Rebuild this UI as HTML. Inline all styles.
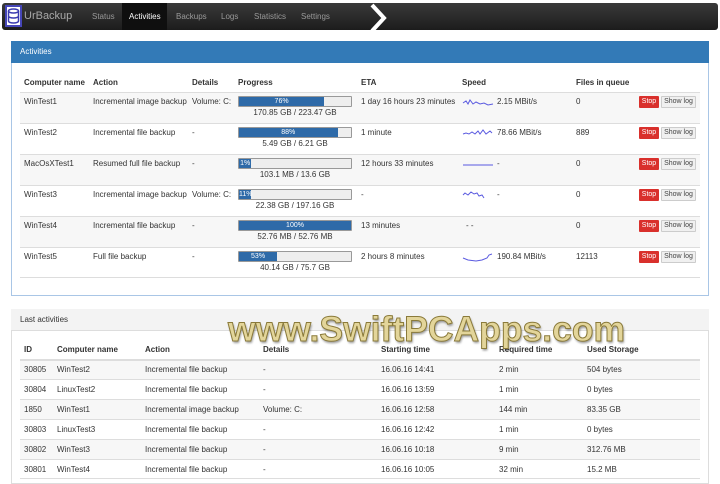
<!DOCTYPE html>
<html><head><meta charset="utf-8"><style>
*{margin:0;padding:0;box-sizing:border-box}
body{width:720px;height:480px;overflow:hidden;background:#fff;font-family:"Liberation Sans",Arial,sans-serif;font-size:8px;color:#333;position:relative}
.a{position:absolute;white-space:nowrap}
.nav{left:2px;top:3px;width:716px;height:27px;background:linear-gradient(#3a3a3a,#1c1c1c);border-radius:3px}
.ni{top:3px;height:27px;line-height:27px;color:#9a9a9a;font-size:8px}
.p1{left:11px;top:41px;width:698px;height:255px;border:1px solid #a9c6e6;}
.h1{left:11px;top:41px;width:698px;height:22px;background:#337ab7;color:#fff;line-height:22px;padding-left:9px}
.p2{left:11px;top:309px;width:698px;height:175px;border:1px solid #ddd}
.h2{left:11px;top:309px;width:698px;height:22px;background:#f3f3f3;border-bottom:1px solid #ddd;line-height:22px;padding-left:9px;color:#333}
.th{font-weight:bold;color:#333}
.row{left:20px;width:680px;border-top:1px solid #ddd}
.g{background:#f7f7f7}
.bar{left:238px;width:114px;height:11px;border:1px solid #999;background:#eee;border-radius:1px}
.bar div{height:100%;background:#2e6aa8;color:#fff;font-size:7px;text-align:center;line-height:9px}
.sub{font-size:8px;color:#333}
.stop{left:639px;width:20px;height:12px;background:#d9302c;color:#fff;font-size:7px;text-align:center;line-height:12px;border-radius:1px}
.log{left:661px;width:35px;height:12px;background:#f0f0f0;border:1px solid #ccc;color:#444;font-size:7px;text-align:center;line-height:10px;border-radius:1px}
.wm{left:228px;top:309px;font-size:35.5px;font-weight:bold;color:#e3d59a;-webkit-text-stroke:1px #8a7a3a;text-shadow:1px 2px 2px rgba(0,0,0,.4)}
</style></head><body>
<div class="a nav"></div>
<div class="a" style="left:5px;top:5px;width:17px;height:22px;border:2px solid #4646b8;background:#fff"></div>
<svg class="a" style="left:7px;top:8px" width="13" height="16"><ellipse cx="6.5" cy="3" rx="5" ry="2" fill="none" stroke="#3a3ab0" stroke-width="1.5"/><path d="M1.5 3v10c0 1.2 2.2 2 5 2s5-.8 5-2V3M1.5 8c0 1.2 2.2 2 5 2s5-.8 5-2" fill="none" stroke="#3a3ab0" stroke-width="1.5"/></svg>
<div class="a ni" style="left:24px;color:#a9a9a9;font-size:11px">UrBackup</div>
<div class="a ni" style="left:92px">Status</div>
<div class="a" style="left:122px;top:3px;width:45px;height:27px;background:#0f0f0f"></div>
<div class="a ni" style="left:129px;color:#fff">Activities</div>
<div class="a ni" style="left:176px">Backups</div>
<div class="a ni" style="left:221px">Logs</div>
<div class="a ni" style="left:254px">Statistics</div>
<div class="a ni" style="left:301px">Settings</div>
<svg class="a" style="left:368px;top:3px" width="22" height="30"><path d="M4 2l12 13L4 28" fill="none" stroke="#fff" stroke-width="4"/></svg>

<div class="a p1"></div>
<div class="a h1">Activities</div>
<div class="a th" style="left:24px;top:78px">Computer name</div>
<div class="a th" style="left:93px;top:78px">Action</div>
<div class="a th" style="left:192px;top:78px">Details</div>
<div class="a th" style="left:238px;top:78px">Progress</div>
<div class="a th" style="left:361px;top:78px">ETA</div>
<div class="a th" style="left:462px;top:78px">Speed</div>
<div class="a th" style="left:576px;top:78px">Files in queue</div>

<div class="a row g" style="top:92px;height:31px"></div>
<div class="a row" style="top:123px;height:31px"></div>
<div class="a row g" style="top:154px;height:31px"></div>
<div class="a row" style="top:185px;height:31px"></div>
<div class="a row g" style="top:216px;height:31px"></div>
<div class="a row" style="top:247px;height:31px;border-bottom:1px solid #ddd"></div>

<div class="a" style="left:24px;top:97px">WinTest1</div><div class="a" style="left:93px;top:97px">Incremental image backup</div><div class="a" style="left:192px;top:97px">Volume: C:</div>
<div class="a bar" style="top:96px"><div style="width:76%">76%</div></div><div class="a sub" style="left:238px;width:114px;text-align:center;top:108px">170.85 GB / 223.47 GB</div>
<div class="a" style="left:361px;top:97px">1 day 16 hours 23 minutes</div><div class="a" style="left:497px;top:97px">2.15 MBit/s</div><div class="a" style="left:576px;top:97px">0</div>

<div class="a" style="left:24px;top:128px">WinTest2</div><div class="a" style="left:93px;top:128px">Incremental file backup</div><div class="a" style="left:192px;top:128px">-</div>
<div class="a bar" style="top:127px"><div style="width:88%">88%</div></div><div class="a sub" style="left:238px;width:114px;text-align:center;top:139px">5.49 GB / 6.21 GB</div>
<div class="a" style="left:361px;top:128px">1 minute</div><div class="a" style="left:497px;top:128px">78.66 MBit/s</div><div class="a" style="left:576px;top:128px">889</div>

<div class="a" style="left:24px;top:159px">MacOsXTest1</div><div class="a" style="left:93px;top:159px">Resumed full file backup</div><div class="a" style="left:192px;top:159px">-</div>
<div class="a bar" style="top:158px"><div style="width:11%">1%</div></div><div class="a sub" style="left:238px;width:114px;text-align:center;top:170px">103.1 MB / 13.6 GB</div>
<div class="a" style="left:361px;top:159px">12 hours 33 minutes</div><div class="a" style="left:497px;top:159px">-</div><div class="a" style="left:576px;top:159px">0</div>

<div class="a" style="left:24px;top:190px">WinTest3</div><div class="a" style="left:93px;top:190px">Incremental image backup</div><div class="a" style="left:192px;top:190px">Volume: C:</div>
<div class="a bar" style="top:189px"><div style="width:11%">11%</div></div><div class="a sub" style="left:238px;width:114px;text-align:center;top:201px">22.38 GB / 197.16 GB</div>
<div class="a" style="left:361px;top:190px">-</div><div class="a" style="left:497px;top:190px">-</div><div class="a" style="left:576px;top:190px">0</div>

<div class="a" style="left:24px;top:221px">WinTest4</div><div class="a" style="left:93px;top:221px">Incremental file backup</div><div class="a" style="left:192px;top:221px">-</div>
<div class="a bar" style="top:220px"><div style="width:100%">100%</div></div><div class="a sub" style="left:238px;width:114px;text-align:center;top:232px">52.76 MB / 52.76 MB</div>
<div class="a" style="left:361px;top:221px">13 minutes</div><div class="a" style="left:466px;top:221px">- -</div><div class="a" style="left:576px;top:221px">0</div>

<div class="a" style="left:24px;top:252px">WinTest5</div><div class="a" style="left:93px;top:252px">Full file backup</div><div class="a" style="left:192px;top:252px">-</div>
<div class="a bar" style="top:251px"><div style="width:34%">53%</div></div><div class="a sub" style="left:238px;width:114px;text-align:center;top:263px">40.14 GB / 75.7 GB</div>
<div class="a" style="left:361px;top:252px">2 hours 8 minutes</div><div class="a" style="left:497px;top:252px">190.84 MBit/s</div><div class="a" style="left:576px;top:252px">12113</div>

<svg class="a" style="left:462px;top:93px" width="34" height="170" fill="none" stroke="#5a5ae0" stroke-width="1">
<path d="M1 10l3-2 2 3 2-4 3 4 3-2 4 2 4-1 4 2 5-1"/>
<path d="M1 41l3-1 3 1 3-2 3 2 3-3 2 3 3-4 3 4 4-3 2 2"/>
<path d="M1 72h30"/>
<path d="M1 102l2-2 3 2 3-3 3 2 3-1 2 3 3-1 2 3"/>
<path d="M1 165l5 2 8 1 6-1 5-2 2-3 3-1"/>
</svg>

<div class="a stop" style="top:96px">Stop</div><div class="a log" style="top:96px">Show log</div>
<div class="a stop" style="top:127px">Stop</div><div class="a log" style="top:127px">Show log</div>
<div class="a stop" style="top:158px">Stop</div><div class="a log" style="top:158px">Show log</div>
<div class="a stop" style="top:189px">Stop</div><div class="a log" style="top:189px">Show log</div>
<div class="a stop" style="top:220px">Stop</div><div class="a log" style="top:220px">Show log</div>
<div class="a stop" style="top:251px">Stop</div><div class="a log" style="top:251px">Show log</div>

<div class="a p2"></div>
<div class="a h2">Last activities</div>
<div class="a th" style="left:24px;top:345px">ID</div>
<div class="a th" style="left:57px;top:345px">Computer name</div>
<div class="a th" style="left:145px;top:345px">Action</div>
<div class="a th" style="left:263px;top:345px">Details</div>
<div class="a th" style="left:381px;top:345px">Starting time</div>
<div class="a th" style="left:499px;top:345px">Required time</div>
<div class="a th" style="left:587px;top:345px">Used Storage</div>

<div class="a row g" style="top:359px;height:20px;border-top:2px solid #ddd"></div>
<div class="a row" style="top:379px;height:20px"></div>
<div class="a row g" style="top:399px;height:20px"></div>
<div class="a row" style="top:419px;height:20px"></div>
<div class="a row g" style="top:439px;height:20px"></div>
<div class="a row" style="top:459px;height:20px;border-bottom:1px solid #ddd"></div>

<div class="a" style="left:24px;top:365px">30805</div><div class="a" style="left:57px;top:365px">WinTest2</div><div class="a" style="left:145px;top:365px">Incremental file backup</div><div class="a" style="left:263px;top:365px">-</div><div class="a" style="left:381px;top:365px">16.06.16 14:41</div><div class="a" style="left:499px;top:365px">2 min</div><div class="a" style="left:587px;top:365px">504 bytes</div>
<div class="a" style="left:24px;top:385px">30804</div><div class="a" style="left:57px;top:385px">LinuxTest2</div><div class="a" style="left:145px;top:385px">Incremental file backup</div><div class="a" style="left:263px;top:385px">-</div><div class="a" style="left:381px;top:385px">16.06.16 13:59</div><div class="a" style="left:499px;top:385px">1 min</div><div class="a" style="left:587px;top:385px">0 bytes</div>
<div class="a" style="left:24px;top:405px">1850</div><div class="a" style="left:57px;top:405px">WinTest1</div><div class="a" style="left:145px;top:405px">Incremental image backup</div><div class="a" style="left:263px;top:405px">Volume: C:</div><div class="a" style="left:381px;top:405px">16.06.16 12:58</div><div class="a" style="left:499px;top:405px">144 min</div><div class="a" style="left:587px;top:405px">83.35 GB</div>
<div class="a" style="left:24px;top:425px">30803</div><div class="a" style="left:57px;top:425px">LinuxTest3</div><div class="a" style="left:145px;top:425px">Incremental file backup</div><div class="a" style="left:263px;top:425px">-</div><div class="a" style="left:381px;top:425px">16.06.16 12:42</div><div class="a" style="left:499px;top:425px">1 min</div><div class="a" style="left:587px;top:425px">0 bytes</div>
<div class="a" style="left:24px;top:445px">30802</div><div class="a" style="left:57px;top:445px">WinTest3</div><div class="a" style="left:145px;top:445px">Incremental file backup</div><div class="a" style="left:263px;top:445px">-</div><div class="a" style="left:381px;top:445px">16.06.16 10:18</div><div class="a" style="left:499px;top:445px">9 min</div><div class="a" style="left:587px;top:445px">312.76 MB</div>
<div class="a" style="left:24px;top:465px">30801</div><div class="a" style="left:57px;top:465px">WinTest4</div><div class="a" style="left:145px;top:465px">Incremental file backup</div><div class="a" style="left:263px;top:465px">-</div><div class="a" style="left:381px;top:465px">16.06.16 10:05</div><div class="a" style="left:499px;top:465px">32 min</div><div class="a" style="left:587px;top:465px">15.2 MB</div>

<div class="a wm">www.SwiftPCApps.com</div>
</body></html>
